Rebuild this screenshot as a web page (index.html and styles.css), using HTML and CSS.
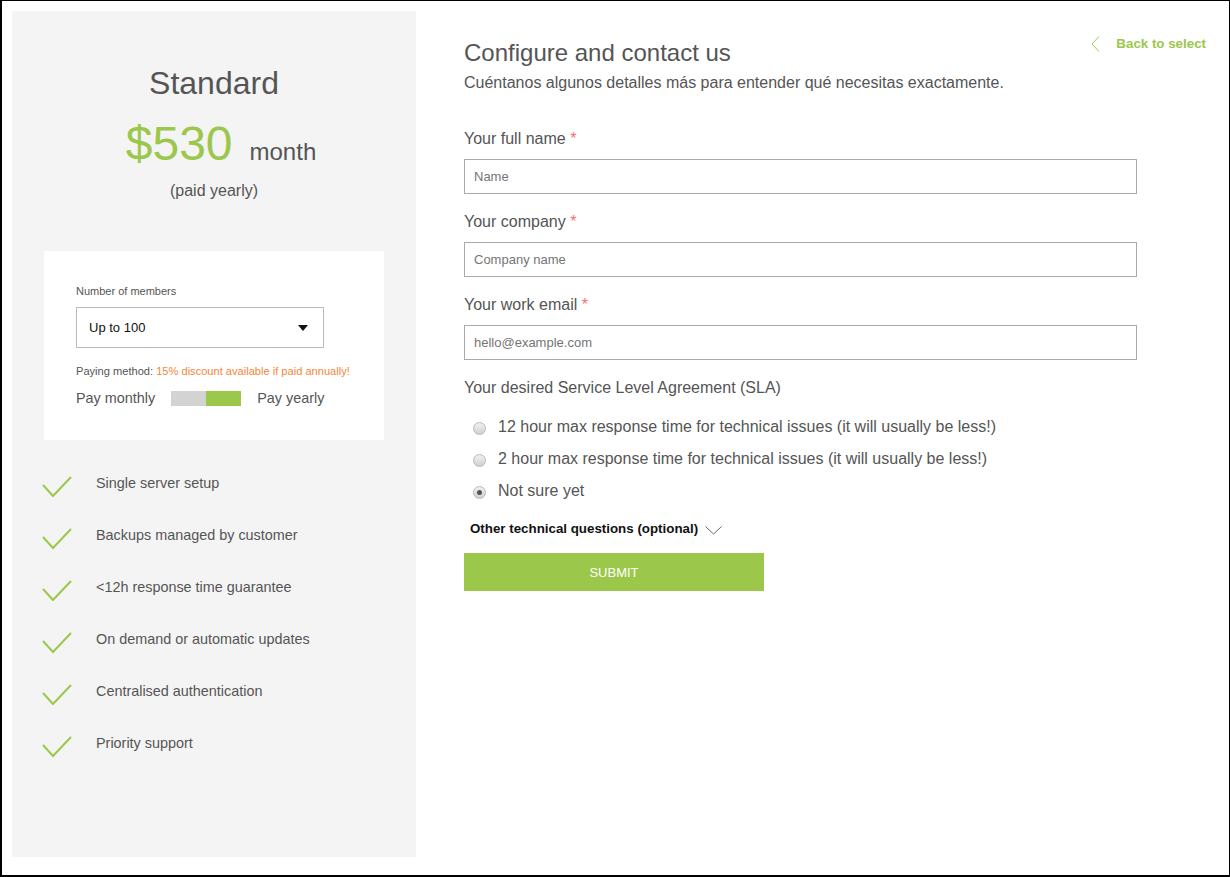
FILE: index.html
```html
<!DOCTYPE html>
<html lang="en">
<head>
<meta charset="utf-8">
<title>Configure and contact us</title>
<link rel="stylesheet" href="styles.css">
</head>
<body>
<div class="frame">
  <aside class="plan">
    <h2 class="plan-name">Standard</h2>
    <div class="price"><span class="amount">$530</span><span class="period">month</span></div>
    <p class="billing">(paid yearly)</p>
    <div class="options">
      <div class="opt-label">Number of members</div>
      <div class="select"><span>Up to 100</span><span class="caret"></span></div>
      <p class="paying">Paying method: <span class="discount">15% discount available if paid annually!</span></p>
      <div class="pay-toggle">
        <span>Pay monthly</span>
        <span class="toggle"><span class="t-off"></span><span class="t-on"></span></span>
        <span>Pay yearly</span>
      </div>
    </div>
    <ul class="features">
      <li><svg class="check" width="30" height="26" viewBox="0 0 30 26"><path d="M1 12 L11 23 L29 4"/></svg><span>Single server setup</span></li>
      <li><svg class="check" width="30" height="26" viewBox="0 0 30 26"><path d="M1 12 L11 23 L29 4"/></svg><span>Backups managed by customer</span></li>
      <li><svg class="check" width="30" height="26" viewBox="0 0 30 26"><path d="M1 12 L11 23 L29 4"/></svg><span>&lt;12h response time guarantee</span></li>
      <li><svg class="check" width="30" height="26" viewBox="0 0 30 26"><path d="M1 12 L11 23 L29 4"/></svg><span>On demand or automatic updates</span></li>
      <li><svg class="check" width="30" height="26" viewBox="0 0 30 26"><path d="M1 12 L11 23 L29 4"/></svg><span>Centralised authentication</span></li>
      <li><svg class="check" width="30" height="26" viewBox="0 0 30 26"><path d="M1 12 L11 23 L29 4"/></svg><span>Priority support</span></li>
    </ul>
  </aside>
  <main class="contact">
    <header class="contact-head">
      <h1 class="title">Configure and contact us</h1>
      <a class="back" href="#"><svg class="back-icon" width="10" height="16" viewBox="0 0 10 16"><path d="M8 0.5 L1 8 L8 15.5"/></svg><span>Back to select</span></a>
    </header>
    <p class="intro">Cuéntanos algunos detalles más para entender qué necesitas exactamente.</p>
    <form class="form">
      <div class="field">
        <label class="field-label">Your full name <span class="req">*</span></label>
        <input class="input" type="text" placeholder="Name">
      </div>
      <div class="field">
        <label class="field-label">Your company <span class="req">*</span></label>
        <input class="input" type="text" placeholder="Company name">
      </div>
      <div class="field">
        <label class="field-label">Your work email <span class="req">*</span></label>
        <input class="input" type="text" placeholder="hello@example.com">
      </div>
      <div class="field-label">Your desired Service Level Agreement (SLA)</div>
      <div class="radios">
        <div class="radio-row"><span class="radio"></span><span>12 hour max response time for technical issues (it will usually be less!)</span></div>
        <div class="radio-row"><span class="radio"></span><span>2 hour max response time for technical issues (it will usually be less!)</span></div>
        <div class="radio-row"><span class="radio checked"></span><span>Not sure yet</span></div>
      </div>
      <div class="more">
        <span>Other technical questions (optional)</span>
        <svg class="more-icon" width="17" height="9" viewBox="0 0 17 9"><path d="M0.5 0.5 L8.5 8 L16.5 0.5"/></svg>
      </div>
      <button class="submit" type="button">SUBMIT</button>
    </form>
  </main>
</div>
</body>
</html>
```

FILE: styles.css
```css
* { box-sizing: border-box; }

html, body {
  margin: 0;
  padding: 0;
  background: #fff;
}

body {
  font-family: "Liberation Sans", Arial, sans-serif;
  color: #555;
}

.frame {
  width: 1230px;
  height: 877px;
  border-style: solid;
  border-color: #000;
  border-width: 1px 1px 2px 2px;
  display: flex;
  align-items: flex-start;
}

/* Left plan panel */
.plan {
  width: 404px;
  height: 846px;
  margin: 10px 0 0 10px;
  background: #f4f4f4;
  padding-top: 53px;
  display: flex;
  flex-direction: column;
}

.plan-name {
  margin: 0;
  font-size: 32px;
  line-height: 38px;
  font-weight: normal;
  text-align: center;
  color: #555;
}

.price {
  margin-top: 18px;
  display: flex;
  justify-content: center;
  align-items: baseline;
  gap: 17px;
  padding-left: 14px;
  line-height: 48px;
}

.amount {
  font-size: 48px;
  color: #9bc74a;
}

.period {
  font-size: 24px;
  color: #555;
}

.billing {
  margin: 5px 0 0;
  font-size: 16px;
  line-height: 20px;
  text-align: center;
}

.options {
  margin: 50px 0 0 32px;
  width: 340px;
  background: #fff;
  padding: 33px 32px 34px;
}

.opt-label {
  font-size: 11px;
  line-height: 14px;
  color: #555;
}

.select {
  margin-top: 9px;
  width: 248px;
  height: 41px;
  border: 1px solid #bbb;
  display: flex;
  align-items: center;
  justify-content: space-between;
  padding: 0 15px 0 12px;
  font-size: 13px;
  color: #111;
}

.caret {
  width: 0;
  height: 0;
  border-left: 5px solid transparent;
  border-right: 5px solid transparent;
  border-top: 6px solid #111;
}

.paying {
  margin: 16px 0 0;
  font-size: 11.1px;
  line-height: 14px;
  color: #555;
}

.discount {
  color: #f4863b;
}

.pay-toggle {
  margin-top: 12px;
  display: flex;
  align-items: center;
  gap: 16px;
  font-size: 14.4px;
  line-height: 16px;
}

.toggle {
  display: flex;
  width: 70px;
  height: 15px;
}

.t-off {
  flex: 1;
  background: #d3d3d3;
}

.t-on {
  flex: 1;
  background: #9bc74a;
}

.features {
  list-style: none;
  margin: 33px 0 0;
  padding: 0 0 0 30px;
}

.features li {
  display: flex;
  align-items: flex-start;
  gap: 24px;
  height: 52px;
  font-size: 14.4px;
  line-height: 20px;
}

.check {
  flex: none;
}

.check path {
  fill: none;
  stroke: #9bc74a;
  stroke-width: 2;
}

/* Right contact column */
.contact {
  flex: 1;
  margin-left: 48px;
  padding: 34px 23px 0 0;
}

.contact-head {
  display: flex;
  justify-content: space-between;
  align-items: flex-start;
}

.title {
  margin: 4px 0 0;
  font-size: 24px;
  line-height: 28px;
  font-weight: normal;
  color: #555;
}

.back {
  display: flex;
  align-items: center;
  gap: 15px;
  margin-top: 1px;
  font-size: 13.33px;
  line-height: 16px;
  font-weight: bold;
  color: #9bc74a;
  text-decoration: none;
}

.back-icon path {
  fill: none;
  stroke: #9bc74a;
  stroke-width: 1;
}

.intro {
  margin: 6px 0 0;
  font-size: 16px;
  line-height: 20px;
}

.form {
  margin-top: 36px;
}

.field {
  margin-bottom: 18px;
}

.field-label {
  display: block;
  font-size: 16px;
  line-height: 20px;
  color: #555;
}

.field .field-label {
  margin-bottom: 10px;
}

.req {
  color: #f17171;
}

.input {
  display: block;
  width: 673px;
  height: 35px;
  margin: 0;
  border: 1px solid #aaa;
  border-radius: 0;
  padding: 0 9px;
  font-family: "Liberation Sans", Arial, sans-serif;
  font-size: 13px;
  color: #333;
  outline: none;
}

.input::placeholder {
  color: #757575;
}

.radios {
  margin-top: 19px;
  display: flex;
  flex-direction: column;
  gap: 12px;
}

.radio-row {
  display: flex;
  align-items: flex-start;
  gap: 12px;
  padding-left: 9px;
  font-size: 16px;
  line-height: 20px;
}

.radio {
  flex: none;
  width: 13px;
  height: 13px;
  margin-top: 5px;
  border-radius: 50%;
  border: 1px solid #b9b9b9;
  background: linear-gradient(#f2f2f2, #cfcfcf);
  display: flex;
  align-items: center;
  justify-content: center;
}

.radio.checked::after {
  content: "";
  width: 5px;
  height: 5px;
  border-radius: 50%;
  background: #555;
}

.more {
  margin-top: 20px;
  padding-left: 6px;
  display: flex;
  align-items: flex-start;
  gap: 7px;
  font-size: 13.33px;
  line-height: 16px;
  font-weight: bold;
  color: #111;
}

.more-icon {
  margin-top: 5px;
}

.more-icon path {
  fill: none;
  stroke: #666;
  stroke-width: 1;
}

.submit {
  display: block;
  margin-top: 16px;
  width: 300px;
  height: 38px;
  border: none;
  border-radius: 0;
  background: #9bc74a;
  color: #fff;
  font-family: "Liberation Sans", Arial, sans-serif;
  font-size: 13px;
  padding: 0;
}
```
